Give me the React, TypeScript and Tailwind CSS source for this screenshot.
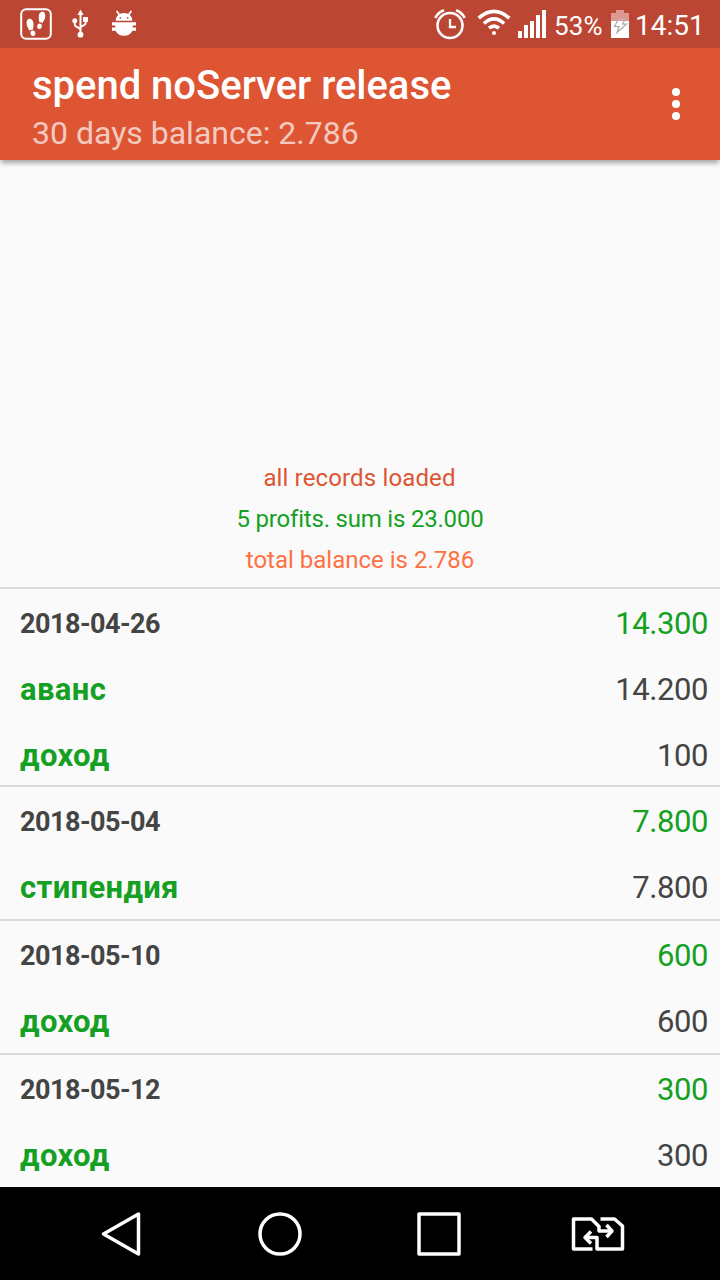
import React from "react";

type Line = { name: string; amount: string };
type Day = { date: string; total: string; lines: Line[]; height: string };

const days: Day[] = [
  {
    date: "2018-04-26",
    total: "14.300",
    lines: [
      { name: "аванс", amount: "14.200" },
      { name: "доход", amount: "100" },
    ],
    height: "h-[198px]",
  },
  { date: "2018-05-04", total: "7.800", lines: [{ name: "стипендия", amount: "7.800" }], height: "h-[134px]" },
  { date: "2018-05-10", total: "600", lines: [{ name: "доход", amount: "600" }], height: "h-[134px]" },
  { date: "2018-05-12", total: "300", lines: [{ name: "доход", amount: "300" }], height: "h-[134px]" },
];

function StepsIcon() {
  return (
    <svg className="ml-5 h-8 w-8 shrink-0" viewBox="0 0 32 32" fill="#fff">
      <rect x="1.2" y="1.2" width="29.6" height="29.6" rx="5" fill="none" stroke="#fff" strokeWidth="2" />
      <path d="M9.500 10.800c2.700 0 4 2.700 4 5.700 0 1.800-.3 3.300-.4 4.800l-4 1.300c-.5-2.700-2.500-4.300-2.500-7.200 0-2.600 1-4.600 2.900-4.600z" />
      <ellipse cx="12.900" cy="25.300" rx="2.400" ry="2.800" transform="rotate(-12 12.900 25.300)" />
      <path d="M22.700 3.800c-2.700 0-4 2.400-4 5.200 0 1.700.3 3.300.4 4.800l3.500 1.300c.6-2.300 2.700-3.800 2.700-6.800 0-2.600-.7-4.500-2.600-4.500z" />
      <ellipse cx="19.500" cy="18.300" rx="2.300" ry="2.700" transform="rotate(15 19.500 18.300)" />
    </svg>
  );
}

function UsbIcon() {
  return (
    <svg className="ml-5 h-8 w-4 shrink-0" viewBox="0 0 16 32" fill="#fff">
      <path d="M8.500 1.500l3 5.500h-6z" />
      <circle cx="8.500" cy="26.700" r="2.900" />
      <circle cx="2.800" cy="12.800" r="2.500" />
      <rect x="11" y="9" width="5" height="4.800" />
      <path d="M8.500 5v20M2.800 13v3.500q0 1.500 1.500 2.200l2.700 1.500q1.500.8 1.500 2.300M13.600 12v3q0 1.500-1.500 2.200l-2.100 1q-1.500.8-1.500 2.300" fill="none" stroke="#fff" strokeWidth="2" />
    </svg>
  );
}

function BugIcon() {
  return (
    <svg className="ml-6 h-8 w-6 shrink-0" viewBox="0 0 24 32" fill="#fff">
      <path d="M5 3.500l2.500 3.500M19 3.500l-2.500 3.500" stroke="#fff" strokeWidth="1.800" strokeLinecap="round" />
      <path d="M3.700 12.700c0-4.700 3.600-7.800 8.300-7.800s8.300 3.100 8.300 7.800z" />
      <circle cx="8.300" cy="9.800" r=".9" fill="#bc4634" />
      <circle cx="15.700" cy="9.800" r=".9" fill="#bc4634" />
      <path d="M0 14.200h24v3.200h-3.300v2H24v3.300h-3.600a9 8 0 0 1-16.800 0H0v-3.300h3.300v-2H0z" />
    </svg>
  );
}

function AlarmIcon() {
  return (
    <svg className="h-8 w-8 shrink-0" viewBox="0 0 32 32" fill="none" stroke="#fff">
      <circle cx="16" cy="17.500" r="12.500" strokeWidth="2.600" />
      <path d="M16 11v8h6" strokeWidth="2.300" />
      <path d="M1.300 9.800Q4.300 4.300 10 2.300M30.700 9.800Q27.700 4.300 22 2.300" strokeWidth="2.600" />
    </svg>
  );
}

function WifiIcon() {
  return (
    <svg className="ml-3 h-8 w-8 shrink-0 overflow-visible" viewBox="0 0 32 32" fill="none" stroke="#fff" strokeWidth="3.600">
      <path d="M.7 10.200Q16-3.400 31.300 10.200M5.900 15.500Q16 6.300 26.100 15.500M11 20.200Q16 15.900 21 20.200" />
      <circle cx="16" cy="25" r="2" fill="#fff" stroke="none" />
    </svg>
  );
}

function SignalIcon() {
  return (
    <svg className="ml-2 h-7 w-7 shrink-0" viewBox="0 0 28 28" fill="#fff">
      <path d="M0 21h4v7H0zM6 15h4v13H6zM12 11h4v17h-4zM18 5h4v23h-4zM24 0h4v28h-4z" />
    </svg>
  );
}

function BatteryIcon() {
  return (
    <svg className="ml-2 h-7 w-[18px] shrink-0" viewBox="0 0 18 28">
      <path d="M5 0h8v3h5v8H0V3h5z" fill="#de9890" />
      <path d="M0 11h18v17H0z" fill="#fff" />
      <path d="M7.500 9h7l-3 5h4L6 22.500l2-6H3.500z" fill="#fff" stroke="#aaa" strokeWidth="1.200" />
      <path d="M8 9.600h5.500l-.8 1.400H7.200z" fill="#de9890" />
    </svg>
  );
}

function StatusBar() {
  return (
    <div className="flex h-12 items-center bg-[#bc4634] text-white">
      <StepsIcon />
      <UsbIcon />
      <BugIcon />
      <div className="ml-auto flex items-center pr-[15px]">
        <AlarmIcon />
        <WifiIcon />
        <SignalIcon />
        <span className="ml-2 w-[49px] whitespace-nowrap pt-1 text-[26px] leading-7 tracking-[0.2px]">53%</span>
        <BatteryIcon />
        <span className="ml-[6px] w-[70px] whitespace-nowrap pt-1 text-[28px] leading-7">14:51</span>
      </div>
    </div>
  );
}

function AppBar() {
  return (
    <header className="relative z-10 flex h-28 items-center justify-between bg-[#de5533] pl-8 pr-10 shadow-[0_4px_5px_-1px_rgba(0,0,0,0.35)]">
      <div className="flex flex-col pt-[10px]">
        <h1 className="text-[40px] font-medium leading-[48px] tracking-[-0.02px] text-white">spend noServer release</h1>
        <p className="text-[32px] leading-[46px] text-white/70">30 days balance: 2.786</p>
      </div>
      <svg className="h-8 w-2" viewBox="0 0 8 32" fill="#fff">
        <circle cx="4" cy="4" r="4" />
        <circle cx="4" cy="16" r="4" />
        <circle cx="4" cy="28" r="4" />
      </svg>
    </header>
  );
}

function DaySection({ day }: { day: Day }) {
  return (
    <section className={`${day.height} shrink-0 border-t-2 border-[#dadada] pt-px`}>
      <div className="flex h-[66px] items-center justify-between pl-5 pr-3">
        <span className="pt-0.5 text-[27px] font-bold tracking-[-0.52px] text-[#444]">{day.date}</span>
        <span className="pt-0.5 text-[31px] tracking-[-0.42px] text-[#14a023]">{day.total}</span>
      </div>
      {day.lines.map((line) => (
        <div key={line.name} className="flex h-[66px] items-center justify-between pl-5 pr-3">
          <span className="pt-0.5 text-[31px] font-bold tracking-[0.35px] text-[#14a023]">{line.name}</span>
          <span className="pt-0.5 text-[31px] tracking-[-0.42px] text-[#444]">{line.amount}</span>
        </div>
      ))}
    </section>
  );
}

function NavBar() {
  return (
    <nav className="flex h-[93px] items-center bg-black">
      <svg className="ml-[100px] h-12 w-11" viewBox="0 0 44 48" fill="none" stroke="#fff" strokeWidth="3.500" strokeLinejoin="round">
        <path d="M3.500 24L38.500 4v40z" />
      </svg>
      <svg className="ml-[112px] h-12 w-12" viewBox="0 0 48 48" fill="none" stroke="#fff" strokeWidth="3.500">
        <circle cx="24" cy="24" r="20" />
      </svg>
      <svg className="ml-[111px] h-12 w-12" viewBox="0 0 48 48" fill="none" stroke="#fff" strokeWidth="3.500" strokeLinejoin="round">
        <rect x="4" y="4" width="40" height="40" />
      </svg>
      <svg className="ml-[105px] h-12 w-[60px]" viewBox="0 0 60 48" fill="none" stroke="#fff" strokeWidth="3.500" strokeLinejoin="round">
        <path d="M24.500 39H5.500V9h18l7.500 7.500V21h11M32.500 9h14l8 7v23H29V27.500H19" />
        <path d="M38.500 15l5.500 6-5.500 6M23 21.500l-6 6 6 6" />
      </svg>
    </nav>
  );
}

export default function App() {
  return (
    <div className="flex h-[1280px] w-[720px] flex-col overflow-hidden bg-[#fafafa] font-['Roboto',sans-serif]">
      <StatusBar />
      <AppBar />
      <main className="flex min-h-0 flex-1 flex-col overflow-hidden">
        <div className="flex h-[427px] shrink-0 flex-col justify-end pb-[6px] text-center text-[24px] leading-[41px]">
          <p className="pr-px tracking-[0.14px] text-[#de5533]">all records loaded</p>
          <p className="tracking-[-0.2px] text-[#14a023] [font-variant-ligatures:common-ligatures]">5 profits. sum is 23.000</p>
          <p className="text-[#ff7043]">total balance is 2.786</p>
        </div>
        {days.map((day) => (
          <DaySection key={day.date} day={day} />
        ))}
      </main>
      <NavBar />
    </div>
  );
}
